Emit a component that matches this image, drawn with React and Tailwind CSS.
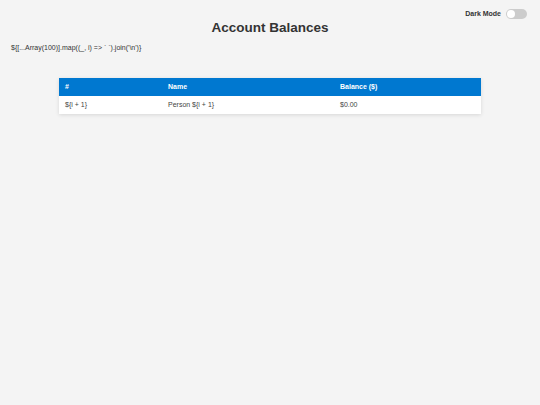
export default function App() {
  return (
    <div className="min-h-[405px] bg-[#f4f4f4] text-[#333] font-['Liberation_Sans',Arial,sans-serif]">
      <div className="flex items-center justify-end gap-[5px] pt-[8px] pr-[13px]">
        <span className="text-[7px] font-bold leading-[11px] text-[#333]">Dark Mode</span>
        <div className="w-[21px] h-[10px] rounded-full bg-[#cccccc] p-[1px]">
          <div className="w-[8px] h-[8px] rounded-full bg-white" />
        </div>
      </div>
      <h1 className="mt-[1px] text-center text-[13.5px] font-bold leading-[16px] text-[#333]">Account Balances</h1>
      <p className="mt-[7px] ml-[11px] text-[7px] leading-[9px]">{"${[...Array(100)].map((_, i) => ` `).join('\\n')}"}</p>
      <div className="mt-[26px] mx-auto w-[422px] bg-white shadow-[0_1px_4px_rgba(0,0,0,0.12)]">
        <table className="w-full border-collapse text-[7px] text-left">
          <thead>
            <tr className="bg-[#0078d0] text-white h-[18px]">
              <th className="w-[103px] px-[6px] font-bold">#</th>
              <th className="w-[172px] px-[6px] font-bold">Name</th>
              <th className="px-[6px] font-bold">Balance ($)</th>
            </tr>
          </thead>
          <tbody>
            <tr className="h-[18px] text-[#444]">
              <td className="px-[6px]">{"${i + 1}"}</td>
              <td className="px-[6px]">{"Person ${i + 1}"}</td>
              <td className="px-[6px]">$0.00</td>
            </tr>
          </tbody>
        </table>
      </div>
    </div>
  )
}
